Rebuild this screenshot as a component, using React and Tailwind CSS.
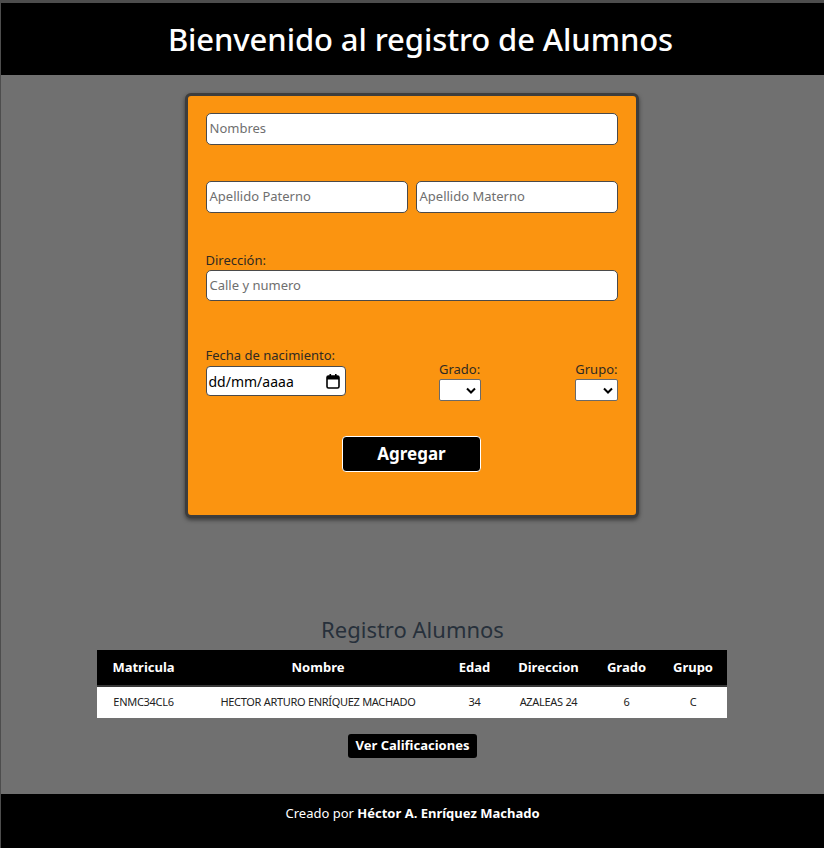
import React from "react";

const font = { fontFamily: '"Noto Sans", "Open Sans", sans-serif' };

const Chevron = () => (
  <svg width="10" height="7" viewBox="0 0 10 7" className="ml-auto mr-1">
    <path d="M1 1.5 L5 5.5 L9 1.5" fill="none" stroke="#000" strokeWidth="2" />
  </svg>
);

const Field = ({ placeholder, className = "" }) => (
  <div
    className={`flex items-center bg-white border border-[#4a4a4a] rounded-[5px] px-[3px] text-[13px] text-[#6f6f6f] ${className}`}
  >
    {placeholder}
  </div>
);

const rows = [
  {
    matricula: "ENMC34CL6",
    nombre: "HECTOR ARTURO ENRÍQUEZ MACHADO",
    edad: "34",
    direccion: "AZALEAS 24",
    grado: "6",
    grupo: "C"
  }
];

export default function App() {
  return (
    <div
      className="w-[824px] h-[848px] flex flex-col bg-[#707070] border-t-[3px] border-l border-[#4d4d4d]"
      style={font}
    >
      {/* HEADER */}
      <header className="h-[72px] bg-black flex items-center justify-center">
        <h1 className="ml-[16px] text-white text-[31px] font-medium tracking-[-0.1px]">
          Bienvenido al registro de Alumnos
        </h1>
      </header>

      {/* FORM */}
      <main className="flex-1 flex flex-col items-center">
        <div className="mt-[18px] -ml-[2px] w-[454px] h-[425px] bg-[#fb9410] border-[3px] border-[#3d3d3d] rounded-[6px] shadow-[0_2px_4px_rgba(0,0,0,0.5)] px-[18px] pt-[17px] flex flex-col">
          <Field placeholder="Nombres" className="h-[32px]" />

          <div className="mt-[36px] flex gap-[8px]">
            <Field placeholder="Apellido Paterno" className="h-[32px] flex-1" />
            <Field placeholder="Apellido Materno" className="h-[32px] flex-1" />
          </div>

          <label className="mt-[37px] text-[13px] leading-[20px] text-[#2f2a22]">
            Dirección:
          </label>
          <Field placeholder="Calle y numero" className="h-[31px]" />

          <div className="mt-[44px] flex justify-between items-start">
            <div className="flex flex-col">
              <span className="text-[13px] leading-[20px] text-[#2f2a22]">
                Fecha de nacimiento:
              </span>
              <div className="mt-[1px] h-[30px] w-[140px] bg-white border border-[#4a4a4a] rounded-[4px] flex items-center pl-[2px] pr-[5px] text-[14px] text-black">
                dd/mm/aaaa
                <svg width="14" height="15" viewBox="0 0 14 15" className="ml-auto">
                  <rect x="1" y="2" width="12" height="12" rx="1.5" fill="none" stroke="#000" strokeWidth="1.6" />
                  <rect x="1" y="2" width="12" height="3.5" fill="#000" />
                  <rect x="3.5" y="0" width="1.6" height="3" fill="#000" />
                  <rect x="9" y="0" width="1.6" height="3" fill="#000" />
                </svg>
              </div>
            </div>

            <div className="flex flex-col mt-[14px]">
              <span className="text-[13px] leading-[20px] text-[#2f2a22]">Grado:</span>
              <div className="h-[22px] w-[42px] bg-white border border-[#6a6a6a] rounded-[2px] flex items-center">
                <Chevron />
              </div>
            </div>

            <div className="flex flex-col items-end mt-[14px]">
              <span className="text-[13px] leading-[20px] text-[#2f2a22]">Grupo:</span>
              <div className="h-[22px] w-[43px] bg-white border border-[#6a6a6a] rounded-[2px] flex items-center">
                <Chevron />
              </div>
            </div>
          </div>

          <div className="mt-[35px] flex justify-center">
            <button className="w-[139px] h-[36px] bg-black border border-white rounded-[4px] text-white text-[17px] font-bold">
              Agregar
            </button>
          </div>
        </div>

        {/* TABLE */}
        <h2 className="mt-[96px] text-[22px] leading-[30px] text-[#27303b]">
          Registro Alumnos
        </h2>
        <table className="mt-[6px] -ml-[2px] w-[630px] border-collapse text-center">
          <thead>
            <tr className="bg-black text-white text-[13px] font-bold border-b-2 border-[#383838]">
              <th className="h-[36px] w-[94px] font-bold">Matricula</th>
              <th className="h-[36px] w-[255px] font-bold">Nombre</th>
              <th className="h-[36px] w-[58px] font-bold">Edad</th>
              <th className="h-[36px] w-[90px] font-bold">Direccion</th>
              <th className="h-[36px] w-[66px] font-bold">Grado</th>
              <th className="h-[36px] w-[67px] font-bold">Grupo</th>
            </tr>
          </thead>
          <tbody>
            {rows.map((r) => (
              <tr key={r.matricula} className="bg-white text-[11px] text-[#222] tracking-[-0.3px]">
                <td className="h-[32px]">{r.matricula}</td>
                <td className="h-[32px]">{r.nombre}</td>
                <td className="h-[32px]">{r.edad}</td>
                <td className="h-[32px]">{r.direccion}</td>
                <td className="h-[32px]">{r.grado}</td>
                <td className="h-[32px]">{r.grupo}</td>
              </tr>
            ))}
          </tbody>
        </table>

        <button className="mt-[16px] h-[24px] px-[8px] bg-black rounded-[3px] text-white text-[13px] font-bold">
          Ver Calificaciones
        </button>
      </main>

      {/* FOOTER */}
      <footer className="h-[54px] bg-black flex justify-center pt-[10px] text-white text-[13px]">
        <span>
          Creado por <b className="font-bold">Héctor A. Enríquez Machado</b>
        </span>
      </footer>
    </div>
  );
}
